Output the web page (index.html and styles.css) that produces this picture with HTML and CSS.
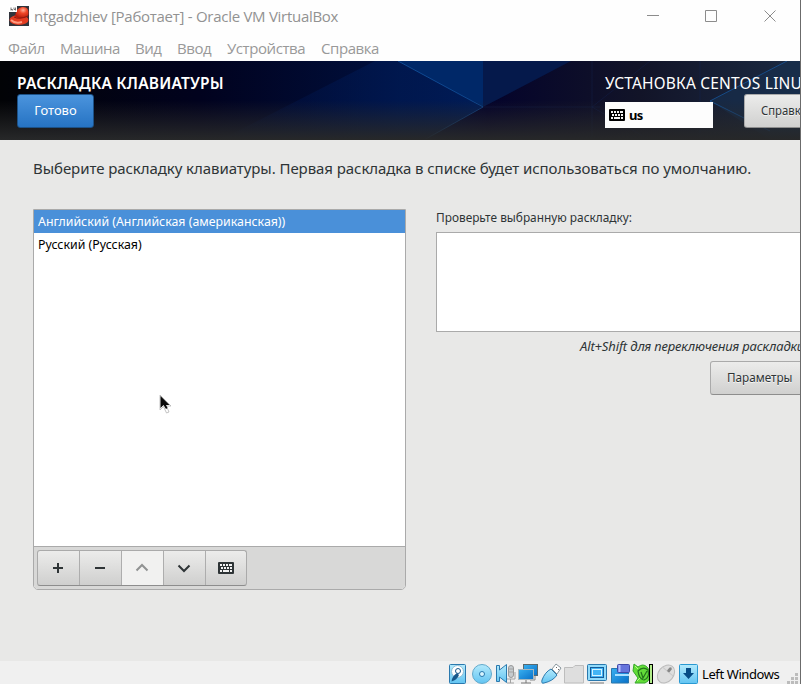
FILE: index.html
```html
<!DOCTYPE html>
<html lang="ru">
<head>
<meta charset="utf-8">
<title>ntgadzhiev [Работает] - Oracle VM VirtualBox</title>
<link rel="stylesheet" href="styles.css">
</head>
<body>
<svg width="0" height="0" class="defs">
  <defs>
    <linearGradient id="blue" x1="0" y1="0" x2="1" y2="1"><stop offset="0" stop-color="#39b0f0"/><stop offset="1" stop-color="#0870c8"/></linearGradient>
    <linearGradient id="sky" x1="0" y1="0" x2="0" y2="1"><stop offset="0" stop-color="#b4eafc"/><stop offset="1" stop-color="#62c4f2"/></linearGradient>
    <radialGradient id="red" cx=".6" cy=".3" r=".7"><stop offset="0" stop-color="#ffb098"/><stop offset=".4" stop-color="#f04828"/><stop offset="1" stop-color="#b81c0c"/></radialGradient>
    <symbol id="kbd" viewBox="0 0 16 12">
      <rect width="16" height="12" rx="1" fill="currentColor"/>
      <path d="M2 3h2M5 3h2M8 3h2M11 3h3M3 6h2M6 6h2M9 6h2M12 6h2M2 9h2M5 9h6M12 9h2" class="keys" stroke-width="2"/>
    </symbol>
  </defs>
</svg>
<div class="window">
  <div class="titlebar">
    <svg class="logo" width="20" height="20" viewBox="0 0 20 20">
      <rect width="20" height="20" fill="#30343c"/>
      <ellipse cx="10" cy="14" rx="9.500" ry="5" fill="#e43c20"/>
      <path d="M2 14Q6 18 13 16" stroke="#ff9b80" stroke-width="2" fill="none"/>
      <path d="M6 10Q7 2 13 1Q20 0 19.500 8Q19 12 13 12Q6 12 6 10Z" fill="url(#red)"/>
      <path d="M5 11Q10 14 19 10" stroke="#8c1c10" fill="none"/>
      <rect width="8" height="6" fill="#fff"/>
      <path d="M2 1.500v3M2 3.500h1.500v1M5 1.500v2h1.500M6.500 1.500v3" stroke="#555" fill="none" stroke-width=".8"/>
    </svg>
    <span class="caption">ntgadzhiev [Работает] - Oracle VM VirtualBox</span>
    <svg class="controls" width="130" height="14" viewBox="0 0 130 14"><path d="M0 7.500h12M58.500 2.500h11v11h-11zM117.500 2.500l11 11M128.500 2.500l-11 11" fill="none" stroke="#8c8c8c"/></svg>
  </div>
  <div class="menubar"><span class="m1">Файл</span><span class="m2">Машина</span><span class="m3">Вид</span><span class="m4">Ввод</span><span class="m5">Устройства</span><span class="m6">Справка</span></div>
  <div class="header">
    <svg class="art" width="800" height="79" viewBox="0 0 800 79">
      <defs>
        <linearGradient id="sea" x1="0" x2="1" y1="0" y2="0"><stop offset="0" stop-color="#020306"/><stop offset=".25" stop-color="#01021e"/><stop offset=".5" stop-color="#00103e"/><stop offset=".61" stop-color="#04032b"/><stop offset=".8" stop-color="#121428"/><stop offset="1" stop-color="#1b2a42"/></linearGradient>
        <linearGradient id="facet" x1="0" x2="1"><stop offset="0" stop-color="#00144c" stop-opacity=".1"/><stop offset="1" stop-color="#001d58"/></linearGradient>
        <linearGradient id="fade" x1="0" x2="0" y1="0" y2="1"><stop offset=".5" stop-color="#282828" stop-opacity="0"/><stop offset="1" stop-color="#272829"/></linearGradient>
      </defs>
      <rect width="800" height="79" fill="url(#sea)"/>
      <path d="M220 79L375 0H400L482 46L424 79Z" fill="url(#facet)"/>
      <path d="M398 0H483V46Z" fill="#002868"/>
      <path d="M483 0H571L483 46Z" fill="#05194b"/>
      <path d="M710 40L787 0H800V79H770Z" fill="#183150" opacity=".6"/>
      <path d="M398 0L483 46L424 79M710 40L787 0M710 40L770 70" stroke="#1760ae" fill="none" opacity=".65"/>
      <path d="M483 46H600M592 0V79M592 46L650 0M592 46L650 79M700 0V79" stroke="#152451" fill="none" opacity=".4"/>
      <rect width="800" height="79" fill="url(#fade)"/>
    </svg>
    <div class="spoke"><span class="heading">РАСКЛАДКА КЛАВИАТУРЫ</span><div class="done"><span>Готово</span></div></div>
    <div class="product"><span class="heading">УСТАНОВКА CENTOS LINU</span>
      <div class="tools"><div class="layout"><svg width="16" height="12"><use href="#kbd"/></svg><b>us</b></div><div class="btn help"><span class="narrow">Справк</span></div></div>
    </div>
  </div>
  <div class="content">
    <p class="intro"><span>Выберите раскладку клавиатуры. Первая раскладка в списке будет использоваться по умолчанию.</span></p>
    <div class="columns">
      <div class="list">
        <div class="row selected"><span>Английский (Английская (американская))</span></div>
        <div class="row"><span>Русский (Русская)</span></div>
        <div class="toolbar">
          <div class="group">
            <i><svg width="16" height="16"><path d="M3 8h10M8 3v10" class="ink"/></svg></i>
            <i><svg width="16" height="16"><path d="M3 8h10" class="ink"/></svg></i>
            <i class="off"><svg width="16" height="16"><path d="M2.500 10.500L8 5l5.500 5.500" class="ink"/></svg></i>
            <i><svg width="16" height="16"><path d="M2.500 5.500L8 11l5.500-5.500" class="ink"/></svg></i>
            <i><svg width="16" height="12"><use href="#kbd"/></svg></i>
          </div>
        </div>
      </div>
      <div class="test">
        <span class="label">Проверьте выбранную раскладку:</span>
        <div class="entry"></div>
        <span class="hint">Alt+Shift для переключения раскладки</span>
        <div class="btn options"><span class="narrow">Параметры</span></div>
      </div>
    </div>
    <svg class="pointer" width="14" height="20" viewBox="0 0 14 20"><path d="M1 1V16L4.500 12.500L7.500 19L10 18L7.500 12H12Z" fill="#fff" stroke="#aaa" stroke-width=".7"/><path d="M1.500 2V14L4.500 11L7 15L8.500 14L7 11H10.500Z" fill="#080808"/></svg>
  </div>
  <div class="statusbar">
    <svg class="devices" width="252" height="23" viewBox="448 661 252 23">
      <g stroke="#2a79ae">
        <rect x="449.500" y="664.500" width="16" height="19" rx="1" fill="url(#sky)"/><circle cx="457.500" cy="671.500" r="6" fill="#fff" stroke="#91bdd4"/><path d="M451.500 681.500Q452 676 457 673L459 675Q457 680 451.500 681.500Z" fill="#17588c" stroke="none"/><circle cx="458" cy="671" r="2.500" fill="#fff" stroke="#17588c"/>
        <circle cx="482" cy="674" r="9.500" fill="url(#sky)" stroke="#62a9cc"/><circle cx="482" cy="674" r="2.500" fill="#d8f5ff"/>
        <rect x="508.500" y="665.500" width="5" height="12" rx="2.500" fill="#c6cbce" stroke="#999"/><path d="M506 674v5h9v-7M510.500 679v4M507 683h7M509 669h4M509 672h4" fill="none" stroke="#a2a2a2"/><path d="M496.500 665.500H499.500V670L506.500 664.500V682.500L499.500 677V681.500H496.500Z" fill="url(#sky)"/>
        <rect x="523.500" y="664.500" width="14" height="11" fill="url(#blue)" stroke="#59696f"/><path d="M535 676v4h-5" fill="none" stroke="#888"/><rect x="518.500" y="669.500" width="15" height="10" fill="url(#blue)" stroke="#a5b8c0"/><path d="M526 680v3M521 683h10" stroke="#777"/>
        <path d="M551 669L557 675Q553 681 544 683Q541 684 542 680Q545 672 551 669Z" fill="url(#sky)"/><path d="M552 669L556 664L561 668L557 674Z" fill="#fff" stroke="#8a979e"/><path d="M556 667l1 1M558 669l1 1" stroke="#666"/>
        <path d="M564.500 683V667.500H573L575 665.500H583.500V683Z" fill="#dedede" stroke="#bdbdbd"/>
        <rect x="587.500" y="664.500" width="19" height="16" rx="1" fill="#91dbfa"/><rect x="590.500" y="667.500" width="13" height="10" fill="#43b5f5" stroke="#155b9a"/><rect x="592.500" y="669.500" width="9" height="6" fill="none" stroke="#d6f3ff"/><path d="M590 683h14" stroke="#777"/>
        <path d="M611.500 683V668.500H628.500V683Z" fill="url(#blue)"/><path d="M615 675h14" stroke="#abe0ff" stroke-width="2"/><rect x="617.500" y="664.500" width="12" height="8" rx="1" fill="#6674dc" stroke="#4149a8"/><path d="M619.500 665v7" stroke="#b5bfff" stroke-width="2"/>
      </g>
      <path d="M634 664L638 667Q643 663 647 667Q653 673 648 681L645 683H641L635 683L638 678L633 671Z" fill="#62dc38" stroke="#38a82c"/><path d="M638 671Q643 666 648 670Q650 678 644 680Q639 679 638 671ZM641 672L643 678L647 671" fill="none" stroke="#23731d" stroke-width="1.200"/><path d="M635 666l3 3M637 681l3-3" stroke="#b6ff80"/><rect x="649.500" y="664.500" width="3" height="19" fill="#b2ed8b" stroke="#000"/>
      <g transform="rotate(40 666 674)"><ellipse cx="666" cy="674" rx="7.500" ry="10" fill="#dedede" stroke="#bababa"/><path d="M659 671h14M666 665v6" stroke="#c9c9c9"/><rect x="664.500" y="666" width="3" height="5" rx="1" fill="#888"/></g>
      <rect x="679.500" y="664.500" width="18" height="19" rx="1" fill="url(#sky)" stroke="#2999d2"/><path d="M686 668h5v5h3l-5.500 6-5.500-6h3z" fill="#074c86"/>
    </svg>
    <span class="hostkey">Left Windows</span>
    <svg class="grip" width="11" height="11"><path d="M8 0h3v3h-3zM4 4h3v3h-3zM8 4h3v3h-3zM0 8h3v3h-3zM4 8h3v3h-3zM8 8h3v3h-3z" fill="#bcbcbc"/></svg>
  </div>
</div>
</body>
</html>
```
FILE: styles.css
```css
* { box-sizing: border-box; }
body { margin: 0; width: 801px; height: 684px; overflow: hidden; background: #6b6b6b; font-family: "Noto Sans", "Open Sans", sans-serif; }
span, b { white-space: nowrap; }
svg { display: block; flex: none; }
.defs { position: absolute; }
.keys { fill: none; stroke: #f2f2f2; }
.window { width: 800px; height: 684px; overflow: hidden; display: flex; flex-direction: column; background: #fefefe; }
.titlebar { height: 34px; flex: none; display: flex; align-items: flex-start; padding: 6px 0 0 9px; font-family: "Open Sans", sans-serif; }
.caption { margin-left: 5px; width: 613px; font-size: 15px; line-height: 21px; color: #929292; letter-spacing: -.28px; }
.controls { margin-top: 2px; }
.menubar { height: 27px; flex: none; display: flex; padding: 3px 0 0 8px; font: 15px/23px "Open Sans", sans-serif; color: #999; letter-spacing: -.43px; }
.m1 { width: 52px; } .m2 { width: 75px; } .m3 { width: 42px; } .m4 { width: 50px; } .m5 { width: 94px; }
.header { height: 79px; flex: none; position: relative; display: flex; overflow: hidden; color: #fff; }
.art { position: absolute; left: 0; top: 0; }
.spoke { position: relative; width: 605px; flex: none; padding: 12px 0 0 17px; }
.heading { display: block; font-size: 15.5px; line-height: 20px; height: 21px; letter-spacing: .2px; }
.spoke .heading { font-weight: 600; }
.done { width: 77px; height: 34px; border: 1px solid #1c5187; border-radius: 3px; background: linear-gradient(#4b94dd, #2673c3); text-align: center; font-size: 13px; line-height: 30px; }
.product { position: relative; padding-top: 12px; flex: none; width: 195px; }
.tools { display: flex; }
.layout { width: 108px; height: 26px; flex: none; margin: 8px 31px 0 0; padding-left: 4px; background: #fdfdfd; color: #000; display: flex; align-items: center; gap: 4px; font-size: 13px; letter-spacing: -.8px; }
.btn { height: 34px; flex: none; border: 1px solid #aaa; border-bottom-color: #8d8d8d; border-radius: 3px; background: linear-gradient(#ececeb, #d0d0cf); color: #2e3436; font-size: 13px; line-height: 31px; text-shadow: 0 1px #f5f5f5; }
.narrow { display: inline-block; transform: scaleX(.9); transform-origin: 0 50%; }
.help { width: 84px; padding-left: 16px; }
.help .narrow { transform: scaleX(.87); }
.content { height: 521px; flex: none; background: #e8e8e7; position: relative; padding-left: 33px; overflow: hidden; color: #2e3436; }
.intro { margin: 17px 0 0; height: 23px; font-size: 15px; line-height: 22px; letter-spacing: -.065px; }
.columns { margin-top: 29px; display: flex; gap: 30px; }
.list { width: 373px; height: 381px; flex: none; border: 1px solid #aaa; border-radius: 0 0 5px 5px; background: #fff; display: flex; flex-direction: column; overflow: hidden; }
.row { height: 23px; padding-left: 4px; font-size: 13px; line-height: 23px; color: #000; }
.row span { display: inline-block; transform: scaleX(.95); transform-origin: 0 50%; }
.selected { background: #4a90d9; color: #fff; }
.toolbar { margin-top: auto; height: 43px; border-top: 1px solid #aaa; background: #d8d8d7; padding: 3px; }
.group { width: 210px; height: 36px; display: flex; border: 1px solid #aaa; border-bottom-color: #8d8d8d; border-radius: 3px; overflow: hidden; background: linear-gradient(#ececeb, #cfcfce); }
.group i { width: 42px; flex: none; display: flex; align-items: center; justify-content: center; border-right: 1px solid #adadad; padding-right: 1px; color: #2e3436; }
.group i:last-child { border: 0; padding: 0; width: 40px; }
.group .off { background: #f1f1f0; color: #909292; }
.ink { fill: none; stroke: currentColor; stroke-width: 2; }
.test { width: 394px; flex: none; display: flex; flex-direction: column; }
.label { height: 23px; font-size: 13px; line-height: 17px; transform: scaleX(.912); transform-origin: 0 50%; }
.entry { height: 100px; border: 1px solid #aaa; background: #fff; }
.hint { margin: 4px 0 0 144px; height: 21px; font-size: 13px; line-height: 20px; font-style: italic; letter-spacing: -.14px; }
.options { width: 120px; margin: 4px 0 0 274px; padding-left: 16px; }
.pointer { position: absolute; left: 159px; top: 254px; }
.statusbar { height: 23px; flex: none; display: flex; background: #f0f0f0; padding-left: 448px; }
.hostkey { width: 85px; margin-left: 2px; font-size: 13px; line-height: 26px; color: #000; letter-spacing: -.4px; }
.grip { margin-top: 12px; }
```
